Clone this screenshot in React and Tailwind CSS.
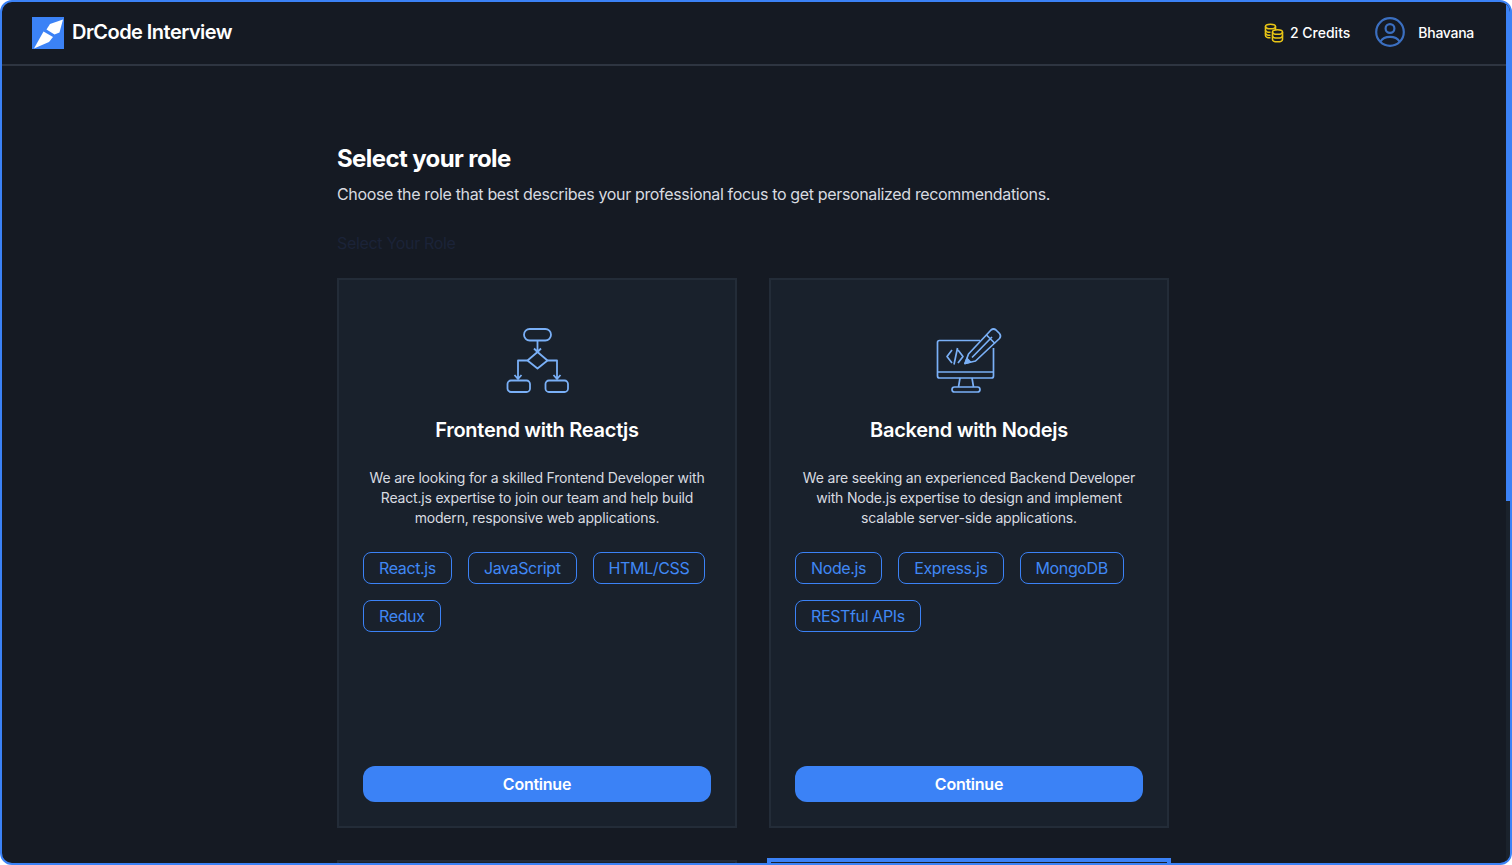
/**
 * RoleSelect
 *
 * Role picker page for DrCode Interview, two columns of role cards under a header.
 */
const roles = [
  {
    title: "Frontend with Reactjs",
    description:
      "We are looking for a skilled Frontend Developer with React.js expertise to join our team and help build modern, responsive web applications.",
    tags: ["React.js", "JavaScript", "HTML/CSS", "Redux"],
    icon: <FlowIcon />,
  },
  {
    title: "Backend with Nodejs",
    description:
      "We are seeking an experienced Backend Developer with Node.js expertise to design and implement scalable server-side applications.",
    tags: ["Node.js", "Express.js", "MongoDB", "RESTful APIs"],
    icon: <MonitorIcon />,
  },
];

function Logo() {
  return (
    <svg width="32" height="32" viewBox="0 0 32 32">
      <rect width="32" height="32" fill="#3b82f6" />
      <path d="M18 7 L31 2.5 L27.5 15.5 L22.5 17.5 L14.5 12.5 Z" fill="#fff" />
      <path d="M11.5 14.5 L21 20 L17 25 L2 31.5 Z" fill="#fff" />
    </svg>
  );
}

function CoinsIcon() {
  return (
    <svg width="20" height="20" viewBox="0 0 20 20" fill="none" stroke="#e8c516" strokeWidth="1.6">
      <ellipse cx="6.5" cy="3.5" rx="5" ry="2.3" />
      <path d="M1.5 3.5V12.5C1.5 13.8 3.5 14.8 6.5 14.8" />
      <path d="M1.5 7C1.5 8.3 3.7 9.3 6.5 9.3" />
      <path d="M1.5 10C1.5 11.3 3.7 12.3 6.5 12.3" />
      <path d="M11.5 3.5V7" />
      <ellipse cx="13.5" cy="9" rx="5" ry="2.3" />
      <path d="M8.5 9V16.5C8.5 17.8 10.7 18.8 13.5 18.8C16.3 18.8 18.5 17.8 18.5 16.5V9" />
      <path d="M8.5 12.7C8.5 14 10.7 15 13.5 15C16.3 15 18.5 14 18.5 12.7" />
    </svg>
  );
}

function UserIcon() {
  return (
    <svg width="30" height="30" viewBox="0 0 30 30" fill="none" stroke="#3b6fc0" strokeWidth="2.2">
      <circle cx="15" cy="15" r="13.8" />
      <circle cx="15" cy="11.5" r="4.4" />
      <path d="M5.5 24.5C7.5 21 11 19.8 15 19.8C19 19.8 22.5 21 24.5 24.5" />
    </svg>
  );
}

function FlowIcon() {
  return (
    <svg width="64" height="70" viewBox="0 0 64 70" fill="none" stroke="#7ab0f7" strokeWidth="1.8" strokeLinejoin="round">
      <rect x="19" y="3" width="27" height="11.5" rx="5.7" />
      <path d="M32.5 14.5V25.5M29 22.5L32.5 26L36 22.5" />
      <path d="M32.5 26L42.5 34.5L32.5 42.5L22.5 34.5Z" />
      <path d="M22.5 34.5H13V52.5M9.5 49L13 53L16.5 49" />
      <path d="M42.5 34.5H52V52.5M48.5 49L52 53L55.5 49" />
      <rect x="2.5" y="54.5" width="22.5" height="11.5" rx="3.5" />
      <rect x="40.5" y="54.5" width="22.5" height="11.5" rx="3.5" />
    </svg>
  );
}

function MonitorIcon() {
  return (
    <svg width="68" height="70" viewBox="0 0 68 70" fill="none" stroke="#7ab0f7" strokeWidth="1.7" strokeLinejoin="round">
      <path d="M45 14.5H4.5A2 2 0 0 0 2.5 16.5V50A2 2 0 0 0 4.5 52H56.5A2 2 0 0 0 58.5 50V22" />
      <path d="M2.5 46H58.5" />
      <path d="M25 52L23.5 61M37 52L38.5 61" />
      <rect x="17" y="61" width="28" height="5" rx="2.5" />
      <path d="M17 24L12 30.5L17 37M23 24L28 30.5L23 37M22.5 22L19 38.5" />
      <path d="M30 37.5L33.5 28L56 4Q58.5 2 61 4L64.5 7.5Q66.5 10 64.5 12.5L40.5 35Z" />
      <path d="M51.5 9L60 17.5M37 31.5L57 11" />
      <path d="M30 37.5L32 32.5L35.5 36Z" fill="#7ab0f7" />
    </svg>
  );
}

function RoleCard({ role }) {
  return (
    <div className="h-[550px] flex flex-col items-center border-2 border-[#232c38] bg-[#19212c] px-6 pb-6 pt-[46px]">
      {role.icon}
      <h3 className="mt-5 text-xl leading-7 font-semibold tracking-[-0.014em] text-white text-center">{role.title}</h3>
      <p className="mt-[24px] text-sm leading-5 tracking-[-0.013em] text-[#d8dbe0] text-center">{role.description}</p>
      <div className="mt-6 w-full flex flex-wrap gap-4">
        {role.tags.map((tag) => (
          <span key={tag} className="h-8 flex items-center rounded-lg border border-[#3b82f6] px-[15px] text-base tracking-[-0.023em] text-[#4088f5]">
            {tag}
          </span>
        ))}
      </div>
      <button className="mt-auto h-9 w-full rounded-xl bg-[#3b82f6] text-base font-semibold tracking-[-0.015em] text-white">Continue</button>
    </div>
  );
}

export default function App() {
  return (
    <div className="h-screen w-full bg-white font-['Inter',sans-serif]">
      <div className="relative h-full flex flex-col overflow-hidden rounded-xl border-2 border-[#3b82f6] bg-[#151a23]">
        <header className="h-16 shrink-0 flex items-center justify-between border-b-2 border-[#2e3541] pl-[30px] pr-9">
          <div className="flex items-center gap-2">
            <Logo />
            <span className="pb-0.5 text-xl font-semibold tracking-[-0.027em] text-white">DrCode Interview</span>
          </div>
          <div className="flex items-center">
            <CoinsIcon />
            <span className="ml-[6px] pb-px text-sm font-medium text-white">2 Credits</span>
            <div className="ml-[25px] -mt-0.5">
              <UserIcon />
            </div>
            <span className="ml-[13px] pb-px text-sm font-medium tracking-[-0.02em] text-white">Bhavana</span>
          </div>
        </header>

        <main className="flex-1 overflow-hidden pl-[335px] pt-[77px]">
          <div className="w-[832px]">
            <h2 className="text-2xl font-bold tracking-[-0.025em] text-white">Select your role</h2>
            <p className="mt-[7px] text-base tracking-[-0.0215em] text-[#d8dbe0]">
              Choose the role that best describes your professional focus to get personalized recommendations.
            </p>
            <div className="mt-[25px] text-base tracking-[-0.02em] text-[#1b2338]">Select Your Role</div>
            <div className="mt-[23px] grid grid-cols-2 gap-8">
              {roles.map((role) => (
                <RoleCard key={role.title} role={role} />
              ))}
              <div className="h-[550px] border-2 border-[#232c38] bg-[#19212c]" />
              <div className="h-[550px] border-2 border-[#3b82f6] bg-[#19212c] ring-2 ring-[#3b82f6]" />
            </div>
          </div>
        </main>

        {/* scrollbar overlay */}
        <div className="absolute right-0 top-0 bottom-0 w-1 bg-[#1a222c]">
          <div className="h-[499px] bg-[#3b82f6]" />
        </div>
      </div>
    </div>
  );
}
